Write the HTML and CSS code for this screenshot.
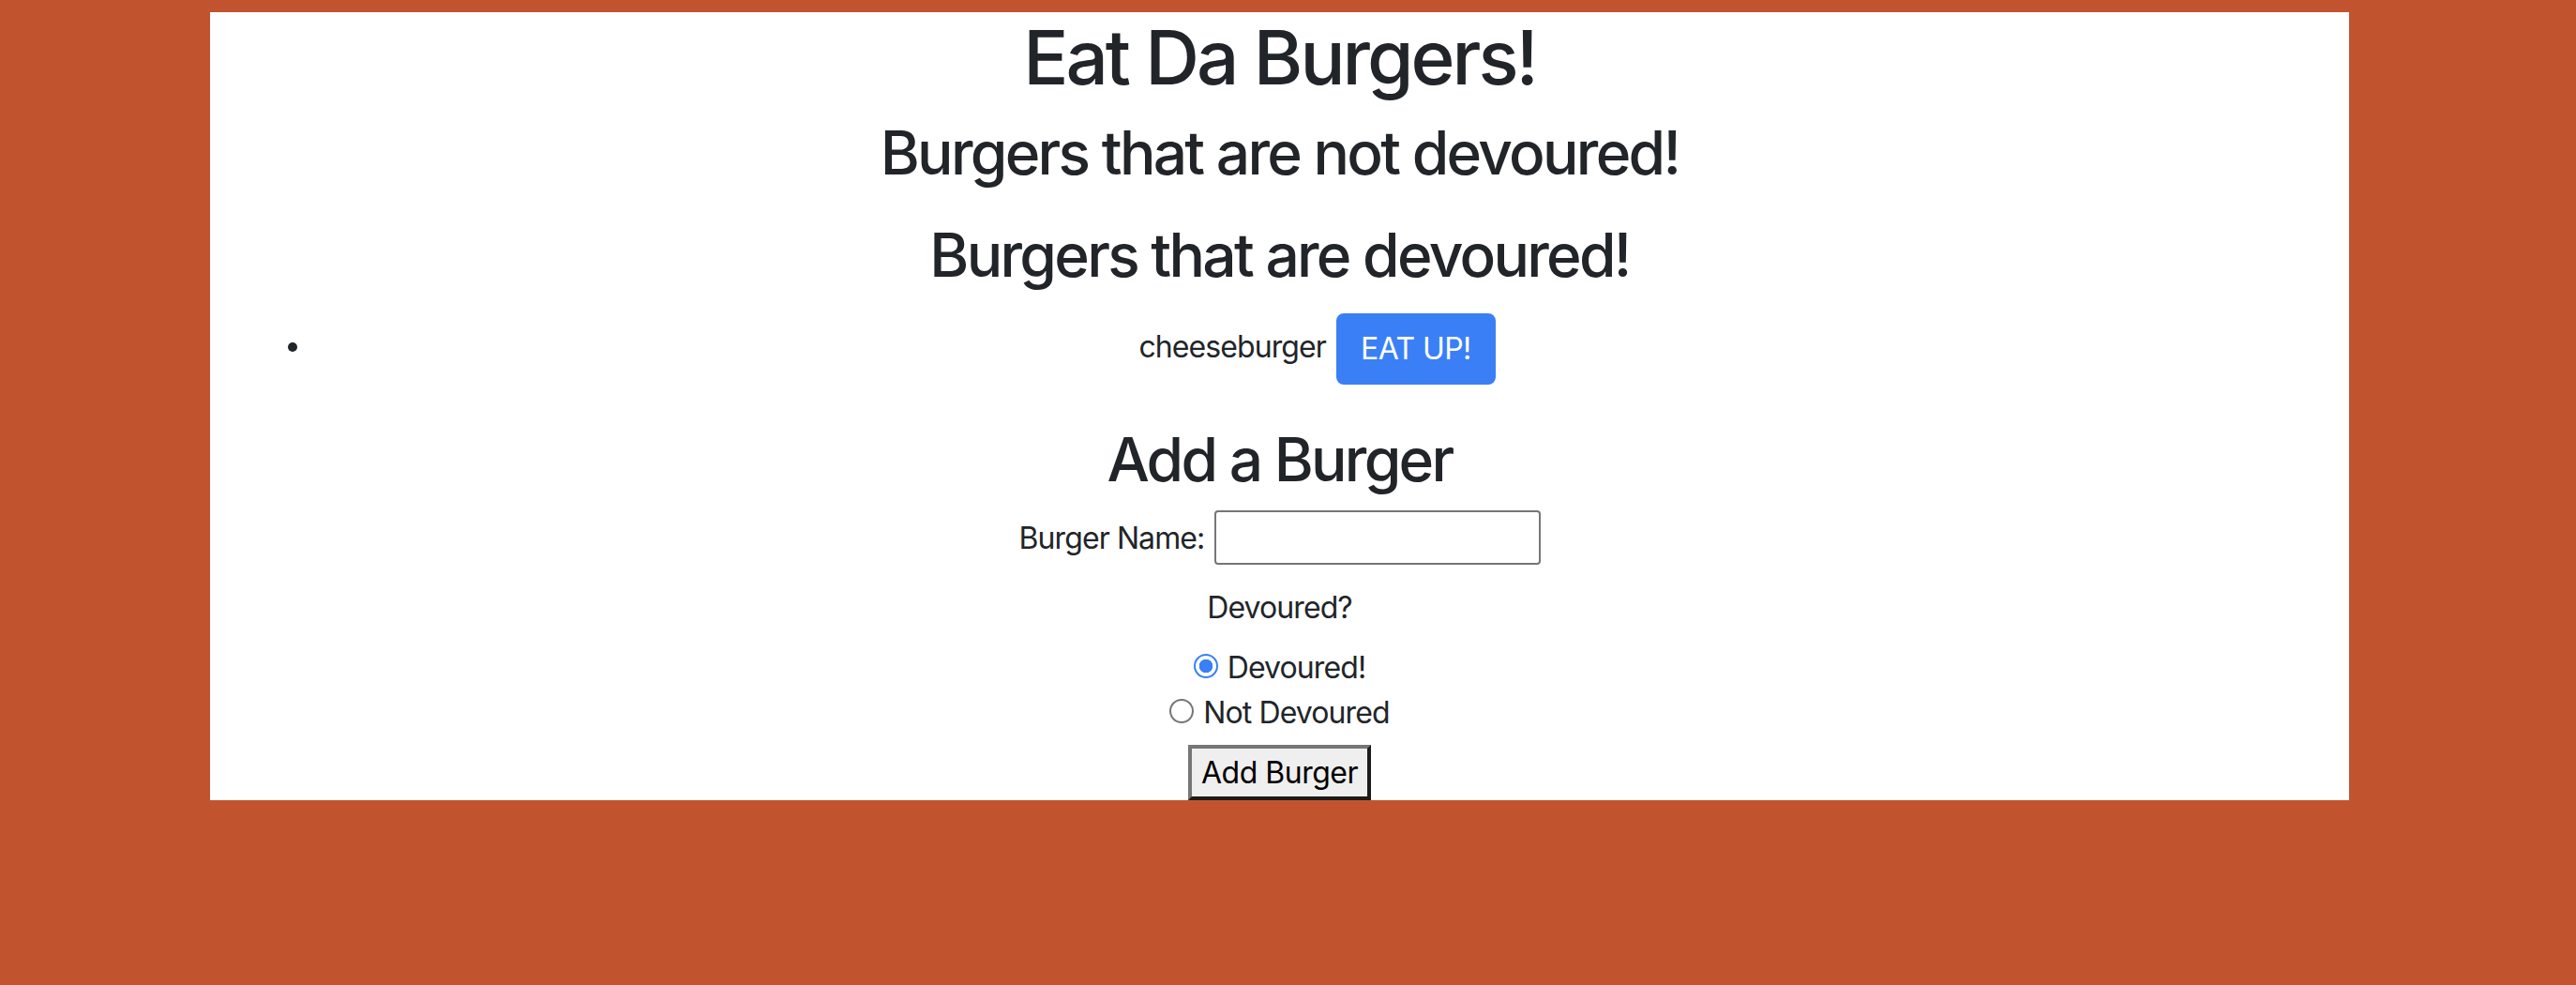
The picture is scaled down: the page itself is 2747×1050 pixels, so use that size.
FILE: index.html
```html
<!DOCTYPE html>
<html lang="en">
<head>
<meta charset="utf-8">
<title>Eat Da Burgers!</title>
<link rel="stylesheet" href="styles.css">
</head>
<body>
<div class="container">
  <h1 class="title">Eat Da Burgers!</h1>
  <h2 class="section-title">Burgers that are not devoured!</h2>
  <ul class="burgers burgers--empty"></ul>
  <h2 class="section-title">Burgers that are devoured!</h2>
  <ul class="burgers burgers--devoured">
    <li class="burger">cheeseburger <button class="eat-btn" type="button">EAT UP!</button></li>
  </ul>
  <h2 class="section-title">Add a Burger</h2>
  <form class="burger-form">
    <div class="name-row"><label class="name-label" for="bn">Burger Name:</label> <input class="name-input" id="bn" type="text"></div>
    <div class="question">Devoured?</div>
    <div class="option"><input class="radio" type="radio" name="dev" id="d1" checked><label for="d1">Devoured!</label></div>
    <div class="option"><input class="radio" type="radio" name="dev" id="d2"><label for="d2">Not Devoured</label></div>
    <button class="add-btn" type="submit">Add Burger</button>
  </form>
</div>
</body>
</html>
```
FILE: styles.css
```css
html, body {
  margin: 0;
  background: #c2532f;
}
body {
  font-family: Inter, "Noto Sans", sans-serif;
  font-size: 32px;
  line-height: 48px;
  letter-spacing: -0.9px;
  color: #212529;
}
.container {
  box-sizing: border-box;
  width: 2281px;
  margin: 13px 0 0 224px;
  padding: 0 30px;
  background: #fff;
  text-align: center;
}
.title {
  font-size: 80px;
  line-height: 96px;
  font-weight: 500;
  letter-spacing: -3px;
  margin: 0 0 16px;
}
.section-title {
  font-size: 64px;
  line-height: 76.8px;
  font-weight: 500;
  letter-spacing: -2.7px;
  margin: 0 0 16px;
}
.burgers {
  margin: 0 0 32px;
  padding-left: 80px;
}
.burgers--devoured {
  margin-top: 23px;
  margin-bottom: 42px;
}
.burger {
  list-style: disc;
}
.eat-btn {
  display: inline-block;
  vertical-align: middle;
  margin-left: 3px;
  font-family: inherit;
  font-size: 32px;
  line-height: 48px;
  letter-spacing: -0.6px;
  padding: 12px 24px;
  border: 2px solid #3a7ff6;
  border-radius: 8px;
  background: #3a7ff6;
  color: #fff;
}
.name-row {
  margin-bottom: 22px;
}
.name-input {
  box-sizing: border-box;
  width: 348px;
  height: 58px;
  padding: 3px 4px;
  border: 2px solid #767676;
  border-radius: 4px;
  font-family: inherit;
  font-size: 32px;
  line-height: 48px;
  vertical-align: baseline;
  margin: 0 0 0 2px;
}
.question {
  margin-bottom: 16px;
}
.radio {
  appearance: none;
  -webkit-appearance: none;
  box-sizing: border-box;
  width: 26px;
  height: 26px;
  margin: 0 10px 0 0;
  border: 2px solid #767676;
  border-radius: 50%;
  background: #fff;
  vertical-align: baseline;
}
.radio:checked {
  border-color: #3a7ff6;
  background: radial-gradient(circle, #3a7ff6 0 7px, #fff 7.5px);
}
.add-btn {
  display: block;
  box-sizing: border-box;
  width: 195px;
  height: 59px;
  margin: 10px auto 0;
  padding: 0;
  border-width: 4px;
  border-style: solid;
  border-color: #767676 #1b1b1b #1b1b1b #767676;
  background: #efefef;
  color: #000;
  font-family: inherit;
  font-size: 32px;
  line-height: 48px;
  letter-spacing: -0.5px;
}
```
